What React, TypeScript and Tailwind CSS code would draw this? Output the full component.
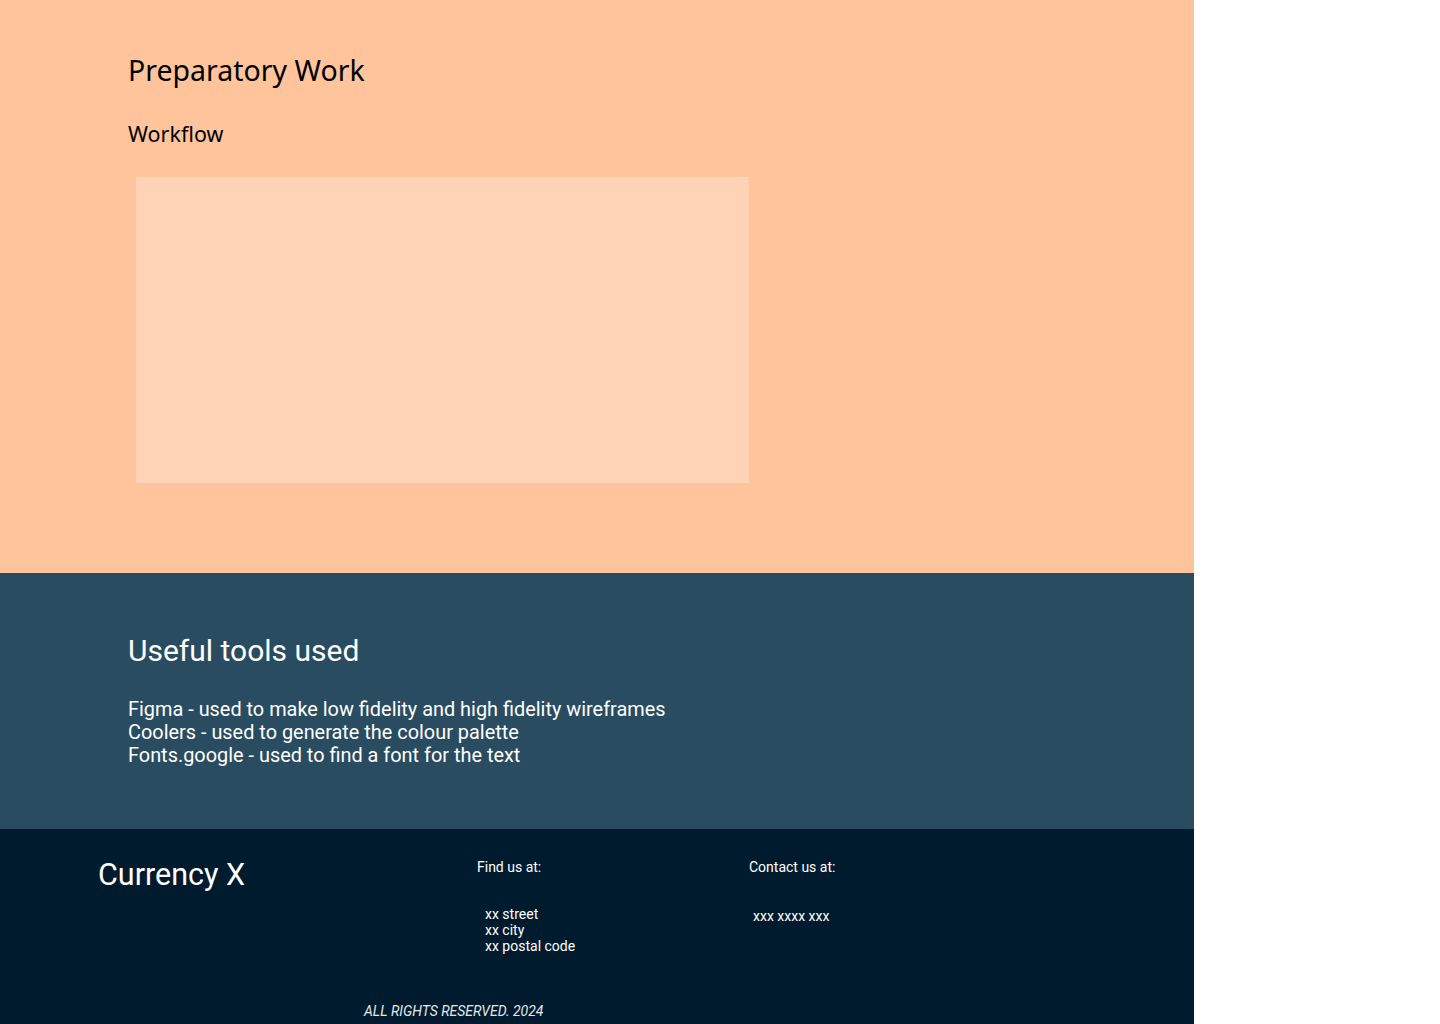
export default function App() {
  const tools = [
    "Figma - used to make low fidelity and high fidelity wireframes",
    "Coolers - used to generate the colour palette",
    "Fonts.google - used to find a font for the text",
  ]

  return (
    <div className="w-[1194px] font-['Roboto',sans-serif]">
      <section className="bg-[#ffc49b] h-[573px] pl-[128px] pt-[51px] font-['Noto_Sans',sans-serif]">
        <h1 className="text-[28.5px] leading-[38px] text-black">Preparatory Work</h1>
        <h2 className="text-[21.5px] leading-[28px] text-black mt-[31px]">Workflow</h2>
        <div className="bg-[#ffd3b5] w-[613px] h-[306px] ml-[8px] mt-[29px]" />
      </section>

      <section className="bg-[#294c60] h-[256px] pl-[128px] pt-[59px] text-white">
        <h2 className="text-[30px] leading-[38px]">Useful tools used</h2>
        <ul className="mt-[28px] text-[19.9px] leading-[23px]">
          {tools.map((tool) => (
            <li key={tool}>{tool}</li>
          ))}
        </ul>
      </section>

      <footer className="bg-[#001b2e] h-[195px] text-white">
        <div className="flex pt-[28px]">
          <div className="w-[477px] pl-[98px] text-[30.5px] leading-[36px]">Currency X</div>
          <div className="w-[272px]">
            <p className="text-[14px] leading-[20px]">Find us at:</p>
            <div className="mt-[29px] pl-[8px] text-[14px] leading-[16px]">
              <p>xx street</p>
              <p>xx city</p>
              <p>xx postal code</p>
            </div>
          </div>
          <div>
            <p className="text-[14px] leading-[20px]">Contact us at:</p>
            <p className="mt-[31px] pl-[4px] text-[14px] leading-[16px]">xxx xxxx xxx</p>
          </div>
        </div>
        <p className="mt-[49px] pl-[364px] text-[14px] italic leading-[16px] text-gray-200">
          ALL RIGHTS RESERVED. 2024
        </p>
      </footer>
    </div>
  )
}
